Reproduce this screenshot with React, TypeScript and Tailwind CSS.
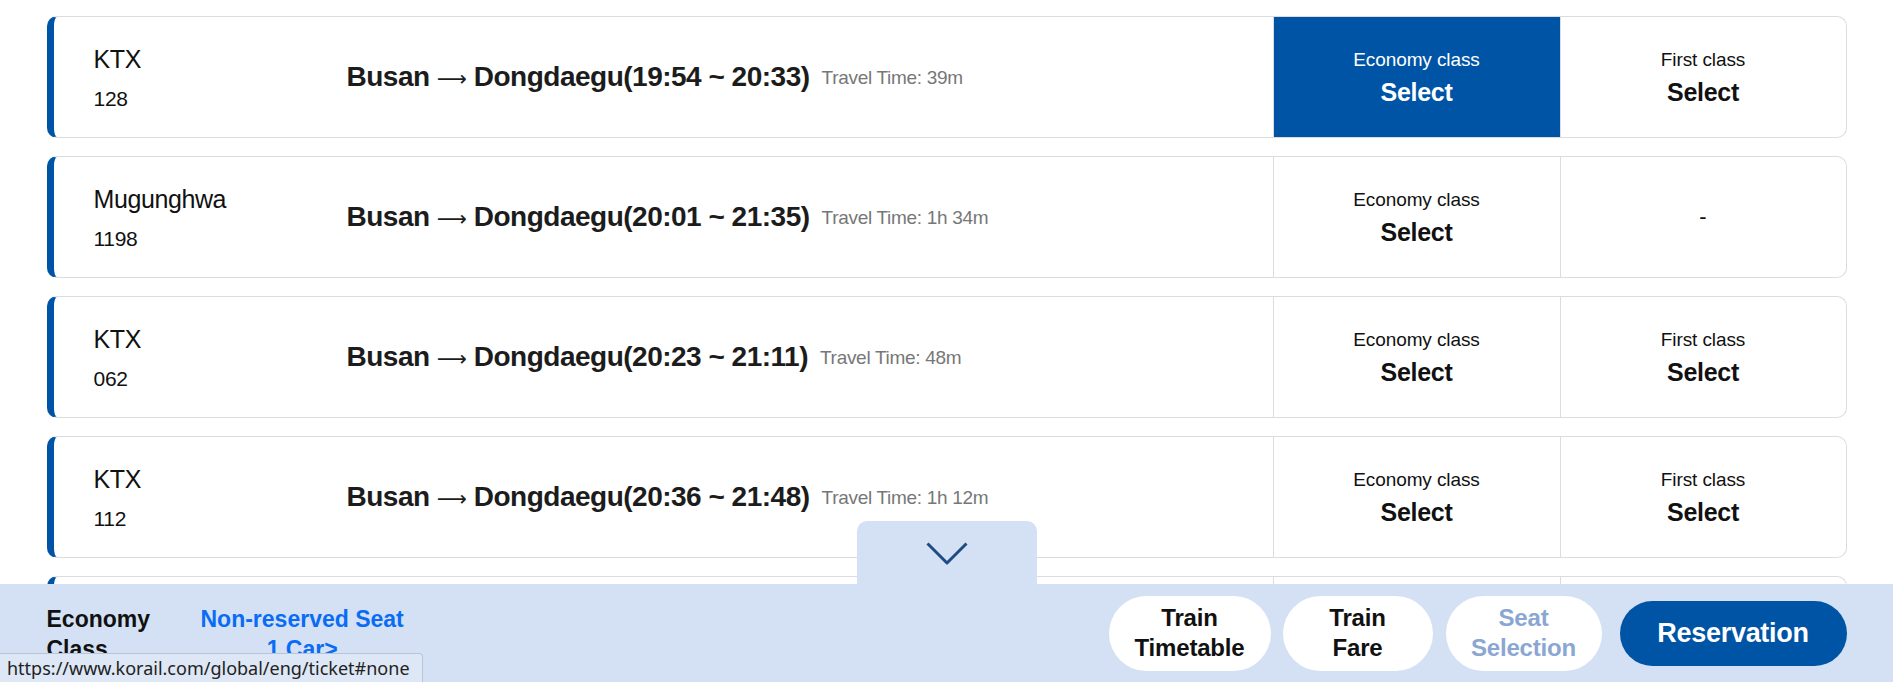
import React from 'react';

interface Train {
  type: string;
  no: string;
  dep: string;
  arr: string;
  travel: string;
  first: boolean;
  selected?: boolean;
}

const TRAINS: Train[] = [
  { type: 'KTX', no: '128', dep: '19:54', arr: '20:33', travel: '39m', first: true, selected: true },
  { type: 'Mugunghwa', no: '1198', dep: '20:01', arr: '21:35', travel: '1h 34m', first: false },
  { type: 'KTX', no: '062', dep: '20:23', arr: '21:11', travel: '48m', first: true },
  { type: 'KTX', no: '112', dep: '20:36', arr: '21:48', travel: '1h 12m', first: true },
  { type: 'KTX', no: '138', dep: '20:58', arr: '21:37', travel: '39m', first: true },
];

function TrainCard({ train }: { train: Train }) {
  return (
    <div className="flex h-[122px] shrink-0 overflow-hidden rounded-[10px] border border-[#dcdcdc] border-l-[7px] border-l-[#0054a6] bg-white">
      <div className="flex w-[293px] flex-col justify-center pl-[40px] text-[#111]">
        <span className="text-[25px] leading-[30px] tracking-[-0.4px]">{train.type}</span>
        <span className="mt-[12px] text-[21px] leading-[25px] tracking-[-0.3px]">{train.no}</span>
      </div>
      <div className="flex flex-1 items-center">
        <span className="text-[28px] font-bold leading-none tracking-[-0.5px] text-[#1c1c1c]">
          Busan{' '}
          <span className="font-['DejaVu_Sans',sans-serif] text-[21px] font-normal">⟶</span>
          {' '}Dongdaegu({train.dep} ~ {train.arr})
        </span>
        <span className="ml-[12px] text-[19px] leading-none tracking-[-0.3px] text-[#777]">
          Travel Time: {train.travel}
        </span>
      </div>
      <div
        className={
          train.selected
            ? 'flex w-[287px] flex-col items-center justify-center border-l border-[#dcdcdc] bg-[#0054a6] text-white'
            : 'flex w-[287px] flex-col items-center justify-center border-l border-[#dcdcdc] text-[#111]'
        }
      >
        <span className="text-[19px] leading-[24px] tracking-[-0.1px]">Economy class</span>
        <span className="mt-[6px] text-[25px] font-bold leading-[28px] tracking-[-0.3px]">Select</span>
      </div>
      <div className="flex w-[286px] flex-col items-center justify-center border-l border-[#dcdcdc] text-[#111]">
        {train.first ? (
          <>
            <span className="text-[19px] leading-[24px] tracking-[-0.1px]">First class</span>
            <span className="mt-[6px] text-[25px] font-bold leading-[28px] tracking-[-0.3px]">Select</span>
          </>
        ) : (
          <span className="text-[22px] leading-none">-</span>
        )}
      </div>
    </div>
  );
}

export default function App() {
  return (
    <div className="relative h-[682px] overflow-hidden bg-white font-['Liberation_Sans',Arial,sans-serif]">
      <div className="mx-auto flex w-[1800px] flex-col gap-[18px] pt-[16px]">
        {TRAINS.map((t, i) => (
          <TrainCard key={i} train={t} />
        ))}
      </div>

      {/* bottom summary bar */}
      <div className="absolute bottom-0 left-0 right-0 h-[98px] bg-[#d4e1f4]">
        <div className="absolute left-1/2 top-[-63px] flex h-[63px] w-[180px] -translate-x-1/2 justify-center rounded-t-[10px] bg-[#d4e1f4] pt-[21px]">
          <svg width="42" height="23" viewBox="0 0 42 23" fill="none">
            <polyline points="1.5,1.5 21,21 40.5,1.5" stroke="#1d4c85" strokeWidth="3" strokeLinejoin="round" />
          </svg>
        </div>
        <div className="mx-auto flex h-full w-[1800px] items-center justify-between">
          <div className="flex items-center pt-[2px]">
            <div className="w-[154px] text-[23px] font-bold leading-[30px] text-[#111]">
              <div>Economy</div>
              <div>Class</div>
            </div>
            <div className="flex flex-col items-center text-[23px] font-bold leading-[30px] text-[#0a6cf5]">
              <span>Non-reserved Seat</span>
              <span>1 Car&gt;</span>
            </div>
          </div>
          <div className="flex items-center">
            <button className="h-[75px] w-[162px] rounded-full bg-white text-[24px] font-bold leading-[30px] tracking-[-0.2px] text-[#111]">
              Train
              <br />
              Timetable
            </button>
            <button className="ml-[12px] h-[75px] w-[150px] rounded-full bg-white text-[24px] font-bold leading-[30px] tracking-[-0.2px] text-[#111]">
              Train
              <br />
              Fare
            </button>
            <button className="ml-[13px] h-[75px] w-[156px] rounded-full bg-white text-[24px] font-bold leading-[30px] tracking-[-0.2px] text-[#8aa6d2]">
              Seat
              <br />
              Selection
            </button>
            <button className="ml-[18px] h-[65px] w-[227px] rounded-full bg-[#0054a6] text-[27px] font-bold tracking-[-0.3px] text-white">
              Reservation
            </button>
          </div>
        </div>
      </div>

      {/* browser status bubble */}
      <div className="absolute bottom-0 left-0 flex h-[29px] w-[423px] items-center rounded-tr-[4px] border-r border-t border-[#b8c5d9] bg-[#dde7f5] pl-[7px] font-['Noto_Sans',sans-serif] text-[18px] text-[#222]">
        https://www.korail.com/global/eng/ticket#none
      </div>
    </div>
  );
}
